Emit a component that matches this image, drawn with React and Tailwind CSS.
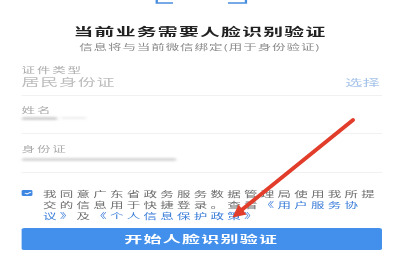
import React from "react";

// The screenshot is stretched sideways, so the page is laid out at 222px wide and widened to 400px.
const cjk = { fontFamily: '"Noto Sans CJK SC", "Noto Sans", sans-serif' };

function FaceFrame() {
  return (
    <svg width="222" height="4" viewBox="0 0 222 4" className="block">
      <path d="M87 0 V3 H96" fill="none" stroke="#4a8ee0" stroke-width="1.3" />
      <path d="M126.5 3 H136.5 V0" fill="none" stroke="#4a8ee0" stroke-width="1.3" />
    </svg>
  );
}

function Field({ label, children }) {
  return (
    <div className="flex flex-col">
      <div className="text-[7.5px] leading-[10px] tracking-[1px] text-[#ababab]">{label}</div>
      {children}
    </div>
  );
}

export default function App() {
  return (
    <div className="relative w-[400px] h-[260px] overflow-hidden bg-white" style={cjk}>
      <div className="w-[222px] h-[260px] flex flex-col origin-top-left scale-x-[1.8018]">
        <FaceFrame />

        <div className="mt-[19.5px] text-center text-[11px] leading-[14px] tracking-[0.7px] font-bold text-[#222]">
          当前业务需要人脸识别验证
        </div>
        <div className="mt-[4px] text-center text-[7.5px] leading-[10px] tracking-[0.5px] text-[#8a8a8a]">
          信息将与当前微信绑定(用于身份验证)
        </div>

        <div className="flex flex-col pl-[12px] pr-[10px]">
          <div className="mt-[13.5px]">
            <Field label="证件类型">
              <div className="mt-[1px] flex items-center justify-between pr-[1px] h-[12px]">
                <span className="text-[10px] leading-[12px] tracking-[0.4px] text-[#bdbdbd]">居民身份证</span>
                <span className="text-[9.5px] leading-[12px] tracking-[0.2px] text-[#a6c4ea]">选择</span>
              </div>
            </Field>
          </div>
          <div className="mt-[7px] h-px bg-[#f1f1f1]" />

          <div className="mt-[8.5px]">
            <Field label="姓名">
              <div className="mt-[1.5px] flex items-center gap-[2px] h-[4px]">
                <div className="w-[20px] h-[3px] rounded-full bg-[#cfcfcf] blur-[1px]" />
                <div className="w-[14px] h-[2px] rounded-full bg-[#ececec] blur-[1px]" />
              </div>
            </Field>
          </div>
          <div className="mt-[13px] h-px bg-[#f1f1f1]" />

          <div className="mt-[9.5px]">
            <Field label="身份证">
              <div className="mt-[3.5px] flex items-center h-[4px]">
                <div className="w-[86px] h-[3px] rounded-full bg-[#d6d6d6] blur-[1px]" />
              </div>
            </Field>
          </div>
          <div className="mt-[11px] h-px bg-[#f1f1f1]" />

          <div className="mt-[15px] flex items-start gap-[5.8px]">
            <div className="mt-[2px] w-[6px] h-[6px] shrink-0 rounded-[1px] bg-[#3d87e2] flex items-center justify-center">
              <svg width="5" height="4" viewBox="0 0 5 4">
                <path d="M0.8 2 L2 3 L4.2 1" fill="none" stroke="white" stroke-width="0.9" />
              </svg>
            </div>
            <div className="flex flex-col text-[7.5px] leading-[11px] tracking-[1.8px] text-[#6e6e6e] whitespace-nowrap">
              <div>我同意广东省政务服务数据管理局使用我所提</div>
              <div>
                交的信息用于快捷登录。查看<span className="text-[#3b7dd8]">《用户服务协</span>
              </div>
              <div>
                <span className="text-[#3b7dd8]">议》</span>及<span className="text-[#3b7dd8]">《个人信息保护政策》</span>
              </div>
            </div>
          </div>

          <button className="mt-[7px] h-[22px] -ml-[0.3px] w-[200px] rounded-[1.5px] bg-[#4290ec] text-white text-[10px] leading-[22px] font-bold tracking-[0.7px] text-center">
            开始人脸识别验证
          </button>
        </div>
      </div>

      <svg className="absolute inset-0 pointer-events-none" width="400" height="260" viewBox="0 0 400 260">
        <line x1="353" y1="120" x2="241" y2="210.5" stroke="#e23d2b" stroke-width="4" stroke-linecap="round" />
        <polygon points="232.5,217.5 238.5,204.5 246.5,214.5" fill="#e23d2b" />
      </svg>
    </div>
  );
}
